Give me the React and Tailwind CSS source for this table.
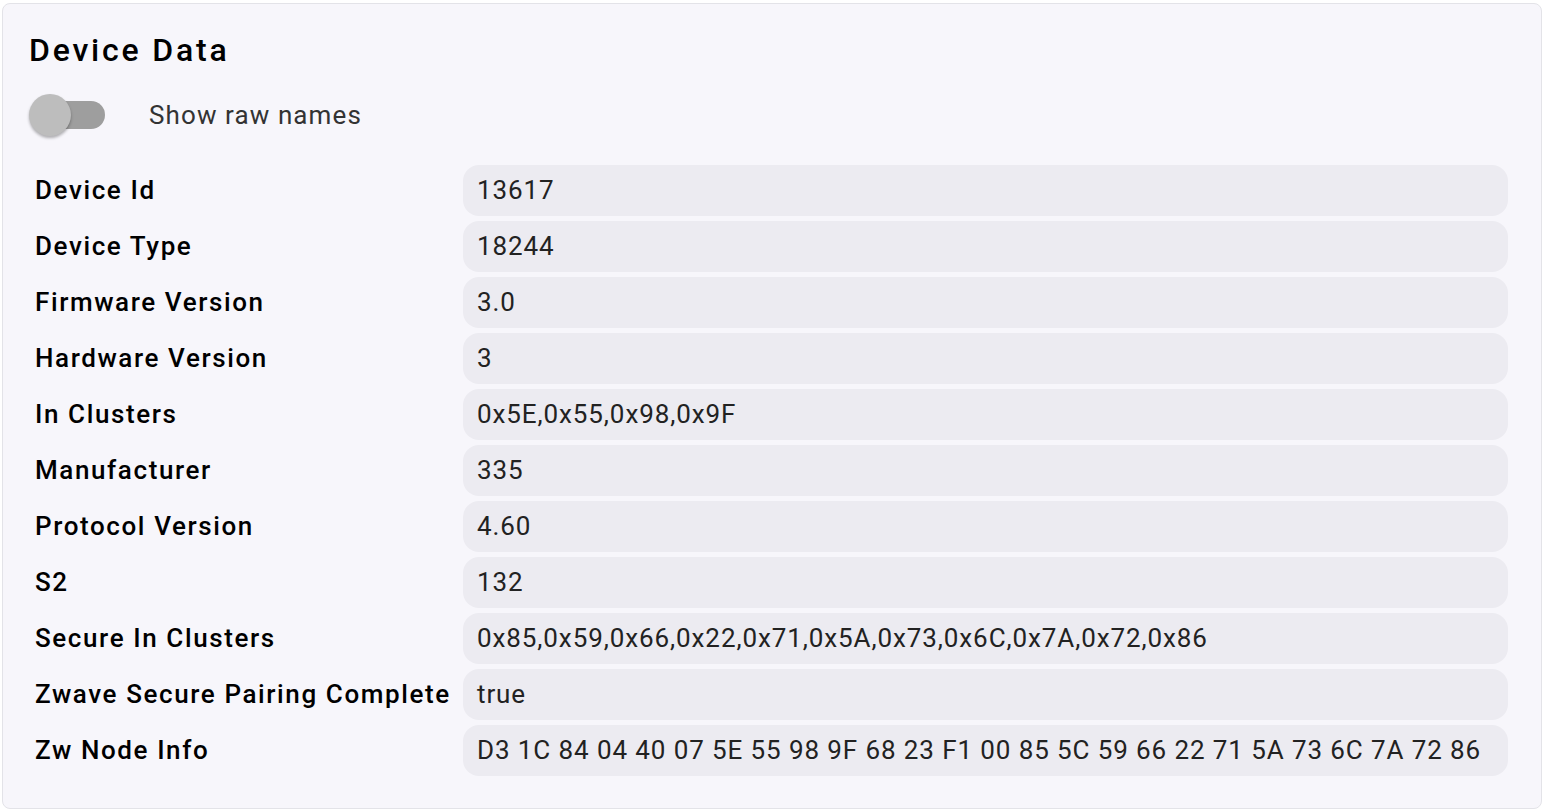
import { useState } from 'react';

const rows = [
  ['Device Id', '13617'],
  ['Device Type', '18244'],
  ['Firmware Version', '3.0'],
  ['Hardware Version', '3'],
  ['In Clusters', '0x5E,0x55,0x98,0x9F'],
  ['Manufacturer', '335'],
  ['Protocol Version', '4.60'],
  ['S2', '132'],
  ['Secure In Clusters', '0x85,0x59,0x66,0x22,0x71,0x5A,0x73,0x6C,0x7A,0x72,0x86'],
  ['Zwave Secure Pairing Complete', 'true'],
  ['Zw Node Info', 'D3 1C 84 04 40 07 5E 55 98 9F 68 23 F1 00 85 5C 59 66 22 71 5A 73 6C 7A 72 86'],
];

function Toggle({ on, onChange }) {
  return (
    <button
      onClick={() => onChange(!on)}
      className="relative w-[76px] h-[42px] flex items-center"
    >
      <span className="absolute left-[6px] w-[70px] h-[28px] rounded-full bg-[#9e9e9e]" />
      <span
        className={`absolute top-0 w-[42px] h-[42px] rounded-full shadow-[0_2px_3px_rgba(0,0,0,0.3)] ${
          on ? 'left-[34px] bg-[#616161]' : 'left-0 bg-[#bdbdbd]'
        }`}
      />
    </button>
  );
}

export default function App() {
  const [raw, setRaw] = useState(false);

  return (
    <div className="w-[1545px] h-[811px] bg-white pt-[3px] pl-[2px] font-['Roboto',sans-serif]">
      <div className="w-[1540px] h-[806px] rounded-lg border border-[#e3e3e8] bg-[#f7f6fb] pl-[26px] pr-[33px] pt-[26px]">
        <h2 className="text-[32px] leading-[40px] text-black font-medium tracking-[2.8px]">Device Data</h2>

        <div className="flex items-center mt-[24px] h-[42px]">
          <Toggle on={raw} onChange={setRaw} />
          <span className="ml-[44px] text-[26px] tracking-[1.1px] text-[#333]">Show raw names</span>
        </div>

        <div className="mt-[29px] flex flex-col gap-[5px]">
          {rows.map(([label, value]) => (
            <div key={label} className="flex items-center">
              <div className="w-[434px] pl-[6px] text-[26px] font-medium tracking-[1.6px] text-black">{label}</div>
              <div className="flex-1 h-[51px] rounded-2xl bg-[#ecebf1] pl-[14px] flex items-center text-[26px] tracking-[0.9px] text-[#222]">
                {value}
              </div>
            </div>
          ))}
        </div>
      </div>
    </div>
  );
}
